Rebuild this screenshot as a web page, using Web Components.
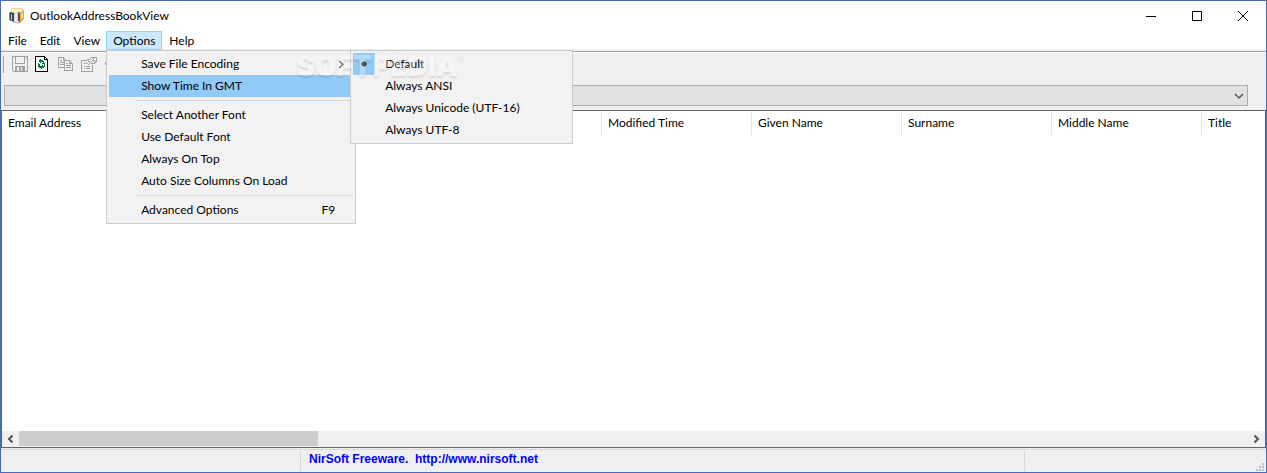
<!DOCTYPE html>
<html lang="en">
<head>
<meta charset="utf-8">
<title>OutlookAddressBookView</title>
<style>
    body {
        margin: 0;
        font: 12px/16px Lato, "Open Sans", sans-serif;
        color: #000;
    }
</style>
</head>
<body>
<ab-window>
    <ab-titlebar>OutlookAddressBookView</ab-titlebar>
    <ab-menubar>
        <ab-menu label="File"></ab-menu>
        <ab-menu label="Edit"></ab-menu>
        <ab-menu label="View"></ab-menu>
        <ab-menu label="Options" opened>
            <ab-menu-item submenu>Save File Encoding
                <ab-popup slot="submenu" class="narrow">
                    <ab-menu-radio checked>Default</ab-menu-radio>
                    <ab-menu-radio>Always ANSI</ab-menu-radio>
                    <ab-menu-radio>Always Unicode (UTF-16)</ab-menu-radio>
                    <ab-menu-radio>Always UTF-8</ab-menu-radio>
                </ab-popup>
            </ab-menu-item>
            <ab-menu-item active>Show Time In GMT</ab-menu-item>
            <ab-separator></ab-separator>
            <ab-menu-item>Select Another Font</ab-menu-item>
            <ab-menu-item>Use Default Font</ab-menu-item>
            <ab-menu-item>Always On Top</ab-menu-item>
            <ab-menu-item>Auto Size Columns On Load</ab-menu-item>
            <ab-separator></ab-separator>
            <ab-menu-item shortcut="F9">Advanced Options</ab-menu-item>
        </ab-menu>
        <ab-menu label="Help"></ab-menu>
    </ab-menubar>
    <ab-toolbar></ab-toolbar>
    <ab-combo label="Address book"></ab-combo>
    <ab-list columns="Email Address,,,,Modified Time,Given Name,Surname,Middle Name,Title"></ab-list>
    <ab-statusbar></ab-statusbar>
    <ab-watermark slot="overlay">SOFTPEDIA</ab-watermark>
</ab-window>

<script>
const BUTTON_RESET = `
    button {
        margin: 0;
        padding: 0;
        border: 0;
        background: none;
        color: inherit;
        font: inherit;
        text-align: left;
    }
    svg { display: block; }
`;

class AbWindow extends HTMLElement {
    constructor() {
        super();
        this.attachShadow({mode: 'open'});
        this.shadowRoot.innerHTML = `
            <style>
                :host {
                    display: flex;
                    flex-direction: column;
                    box-sizing: border-box;
                    position: relative;
                    min-height: 100vh;
                    border: 1px solid #466bb8;
                    background: #f0f0f0;
                    overflow: hidden;
                }
            </style>
            <slot></slot>
            <slot name="overlay"></slot>
        `;
    }
}

class AbTitlebar extends HTMLElement {
    constructor() {
        super();
        this.attachShadow({mode: 'open'});
        this.shadowRoot.innerHTML = `
            <style>
                ${BUTTON_RESET}
                :host {
                    display: flex;
                    align-items: center;
                    height: 30px;
                    padding-left: 8px;
                    background: #fff;
                }
                h1 {
                    flex: 1;
                    margin: 0 0 0 5px;
                    font: inherit;
                }
                button {
                    display: flex;
                    align-items: center;
                    justify-content: center;
                    width: 46px;
                    height: 30px;
                }
            </style>
            <svg width="16" height="16" viewBox="0 0 16 16">
                <path d="M2 1l2-1h9l2 2v3H2z" fill="#f3cf8c"/>
                <path d="M3 1h9l1 3H3z" fill="#fdf0d2"/>
                <path d="M10 5l5-2v8l-4 4-1-1z" fill="#eda938"/>
                <path d="M12 6l2-1v4l-2 2z" fill="#fbe3ae"/>
                <path d="M0 4l2 1v8l-2-1z" fill="#8d8a86"/>
                <path d="M1 4l4 1v9l-4-2z" fill="#45464c"/>
                <path d="M2 6l1 1v5l-1-1z" fill="#c9ccd2"/>
                <path d="M5 5l4-1v9l-4 1z" fill="#c5d4e8"/>
                <path d="M6 6l2-1v7l-2 1z" fill="#eef4fb"/>
                <path d="M9 4l2 1v9l-2-1z" fill="#55565c"/>
                <path d="M3 13.500l6 1.500 3-1" stroke="#a5a19a" fill="none"/>
            </svg>
            <h1><slot></slot></h1>
            <button aria-label="Minimize">
                <svg width="10" height="10"><path d="M0 5h10v1H0z"/></svg>
            </button>
            <button aria-label="Maximize">
                <svg width="10" height="10"><path d="M.5.5h9v9h-9z" fill="none" stroke="#000"/></svg>
            </button>
            <button aria-label="Close">
                <svg width="10" height="10"><path d="M0 0l10 10M10 0L0 10" stroke="#000"/></svg>
            </button>
        `;
    }
}

class AbMenubar extends HTMLElement {
    constructor() {
        super();
        this.attachShadow({mode: 'open'});
        this.shadowRoot.innerHTML = `
            <style>
                :host {
                    display: flex;
                    align-items: flex-start;
                    height: 20px;
                    background: #fff;
                    box-shadow: inset 0 -2px #f0f0f0;
                }
            </style>
            <slot></slot>
        `;
    }
}

class AbMenu extends HTMLElement {
    constructor() {
        super();
        this.attachShadow({mode: 'open'});
        const label = this.getAttribute('label');
        this.shadowRoot.innerHTML = `
            <style>
                ${BUTTON_RESET}
                :host {
                    display: block;
                    position: relative;
                }
                button {
                    display: block;
                    height: 19px;
                    padding: 0 6px 0 7px;
                }
                ab-popup {
                    display: none;
                    top: 19px;
                    left: 0;
                    width: 250px;
                }
                :host([opened]) button {
                    padding: 0 6px;
                    border: 1px solid #99d1ff;
                    background: #cce8ff;
                }
                :host([opened]) ab-popup {
                    display: block;
                }
            </style>
            <button aria-haspopup="menu">${label}</button>
            <ab-popup><slot></slot></ab-popup>
        `;
        this.shadowRoot.querySelector('button').addEventListener('click', () => {
            this.toggleAttribute('opened');
        });
    }
}

class AbPopup extends HTMLElement {
    constructor() {
        super();
        this.attachShadow({mode: 'open'});
        this.shadowRoot.innerHTML = `
            <style>
                :host {
                    display: block;
                    position: absolute;
                    z-index: 10;
                    box-sizing: border-box;
                    padding: 2px;
                    border: 1px solid #ccc;
                    background: #f2f2f2;
                }
                :host(.narrow) {
                    top: -3px;
                    left: calc(100% - 3px);
                    width: 223px;
                }
            </style>
            <slot></slot>
        `;
    }
}

class AbMenuItem extends HTMLElement {
    constructor() {
        super();
        this.attachShadow({mode: 'open'});
        const shortcut = this.getAttribute('shortcut') || '';
        this.shadowRoot.innerHTML = `
            <style>
                ${BUTTON_RESET}
                :host {
                    display: block;
                    position: relative;
                }
                button {
                    display: flex;
                    align-items: center;
                    justify-content: space-between;
                    width: 100%;
                    height: 22px;
                    padding: 0 18px 0 32px;
                }
                :host([submenu]) button {
                    padding-right: 9px;
                }
                :host([active]) button {
                    background: #91c9f7;
                }
                svg { display: none; }
                :host([submenu]) svg { display: block; }
            </style>
            <button>
                <span><slot></slot></span>
                <span>${shortcut}</span>
                <svg width="6" height="9"><path d="M1 1l4 3.500L1 8" fill="none" stroke="#222" stroke-width="1.200"/></svg>
            </button>
            <slot name="submenu"></slot>
        `;
    }
}

class AbMenuRadio extends HTMLElement {
    constructor() {
        super();
        this.attachShadow({mode: 'open'});
        const checked = this.hasAttribute('checked') ? 'checked' : '';
        this.shadowRoot.innerHTML = `
            <style>
                :host { display: block; }
                label {
                    display: flex;
                    align-items: center;
                    gap: 10px;
                    height: 22px;
                }
                input {
                    appearance: none;
                    width: 22px;
                    height: 22px;
                    margin: 0;
                }
                input:checked {
                    background: radial-gradient(circle at 50% 50%, #111 2px, transparent 3px) #91c9f7;
                }
            </style>
            <label><input type="radio" ${checked}><span><slot></slot></span></label>
        `;
    }
}

class AbSeparator extends HTMLElement {
    constructor() {
        super();
        this.attachShadow({mode: 'open'});
        this.shadowRoot.innerHTML = `
            <style>
                :host {
                    display: block;
                    padding: 3px 0 3px 28px;
                }
                div {
                    height: 1px;
                    background: #d7d7d7;
                }
            </style>
            <div></div>
        `;
    }
}

class AbToolbar extends HTMLElement {
    constructor() {
        super();
        this.attachShadow({mode: 'open'});
        this.shadowRoot.innerHTML = `
            <style>
                ${BUTTON_RESET}
                :host {
                    display: flex;
                    gap: 7px;
                    box-sizing: border-box;
                    height: 32px;
                    padding: 4px 2px;
                    border-top: 1px solid #a0a0a0;
                    box-shadow: inset 0 1px #fff;
                }
                i {
                    width: 1px;
                    height: 17px;
                    margin-right: 1px;
                    background: #a0a0a0;
                }
                button {
                    width: 16px;
                    height: 16px;
                }
            </style>
            <i></i>
            <button aria-label="Save">
                <svg width="16" height="16" fill="none" stroke="#a0a0a0" shape-rendering="crispEdges">
                    <path d="M.5.5h15v15h-14l-1-1z"/>
                    <path d="M3.500.5v7h9v-7M13.500 2.500h1"/>
                    <path d="M3 10h10v6H3z" fill="#a0a0a0" stroke="none"/>
                    <path d="M5 11h2v4H5zM9 11h1v4H9z" fill="#f0f0f0" stroke="none"/>
                </svg>
            </button>
            <button aria-label="Refresh">
                <svg width="16" height="16" shape-rendering="crispEdges">
                    <path d="M.5.5h9l3 3v12H.5z" fill="#fff" stroke="#000"/>
                    <path d="M9.500.5v3h3" fill="none" stroke="#000"/>
                    <path d="M5 3h1v1h2v1h1v2h1v1H7V7h1V6H6v1H5V6H4V4h1z" fill="#008040"/>
                    <path d="M3 7h1v1h1v2h2V9h1v3H7v1H6v-1H4v-1H3zM9 8h1v3H9v1H8v-2h1z" fill="#008040"/>
                </svg>
            </button>
            <button aria-label="Copy">
                <svg width="16" height="16" fill="none" stroke="#a0a0a0" shape-rendering="crispEdges">
                    <path d="M6 11.500H.5v-10h5l3 3V5M5.500 1.500v3h3M2 4.500h2M2 6.500h4M2 8.500h4"/>
                    <path d="M6.500 4.500h5l3 3v7h-8zM11.500 4.500v3h3M8 7.500h2M8 9.500h5M8 11.500h5"/>
                </svg>
            </button>
            <button aria-label="Properties">
                <svg width="16" height="16" fill="none" stroke="#a0a0a0" shape-rendering="crispEdges">
                    <path d="M5 4.500H.5v11h11V9M3 7.500h2M3 10.500h1M5 10.500h4M3 12.500h1M5 12.500h4"/>
                    <path d="M4.500 5.500l2-2h2l2-2h2v2l-3 3-2 2-2-2M11 1.500h4v4l-2 2h-3M7 5.500h2M12 4.500h2"/>
                </svg>
            </button>
            <button aria-label="Find">
                <svg width="16" height="16" fill="#a0a0a0"><path d="M1 6h6v3H1zM8 4h6v7H8z"/></svg>
            </button>
        `;
    }
}

class AbCombo extends HTMLElement {
    constructor() {
        super();
        this.attachShadow({mode: 'open'});
        this.shadowRoot.innerHTML = `
            <style>
                :host {
                    display: block;
                    padding: 2px 18px 4px 3px;
                }
                div {
                    display: grid;
                    align-items: center;
                }
                select, svg { grid-area: 1 / 1; }
                select {
                    appearance: none;
                    width: 100%;
                    height: 21px;
                    margin: 0;
                    border: 1px solid #adadad;
                    border-radius: 0;
                    background: #e1e1e1;
                    font: inherit;
                }
                svg {
                    justify-self: end;
                    margin-right: 4px;
                    pointer-events: none;
                }
            </style>
            <div>
                <select aria-label="${this.getAttribute('label')}"></select>
                <svg width="10" height="6"><path d="M1 1l4 4 4-4" fill="none" stroke="#444" stroke-width="1.200"/></svg>
            </div>
        `;
    }
}

class AbList extends HTMLElement {
    constructor() {
        super();
        this.attachShadow({mode: 'open'});
        const columns = this.getAttribute('columns').split(',');
        this.shadowRoot.innerHTML = `
            <style>
                :host {
                    display: flex;
                    flex: 1;
                    flex-direction: column;
                    border: 1px solid #646464;
                    background: #fff;
                }
                #view {
                    flex: 1;
                    overflow: hidden;
                }
                table {
                    width: 1350px;
                    table-layout: fixed;
                    border-collapse: separate;
                    border-spacing: 0;
                }
                th {
                    height: 24px;
                    padding: 0 6px;
                    border-right: 1px solid #e5e5e5;
                    font-weight: normal;
                    text-align: left;
                }
            </style>
            <div id="view">
                <table>
                    <thead><tr>${columns.map(c => `<th>${c}</th>`).join('')}</tr></thead>
                    <tbody></tbody>
                </table>
            </div>
            <ab-scrollbar></ab-scrollbar>
        `;
    }
}

class AbScrollbar extends HTMLElement {
    constructor() {
        super();
        this.attachShadow({mode: 'open'});
        this.shadowRoot.innerHTML = `
            <style>
                ${BUTTON_RESET}
                :host {
                    display: flex;
                    height: 16px;
                    background: #f0f0f0;
                }
                button {
                    display: flex;
                    align-items: center;
                    justify-content: center;
                    width: 17px;
                    height: 15px;
                }
                #track { flex: 1; }
                #thumb {
                    width: 24.3%;
                    height: 15px;
                    background: #cdcdcd;
                }
            </style>
            <button aria-label="Scroll left">
                <svg width="7" height="8"><path d="M5.500.5L2 4l3.500 3.500" fill="none" stroke="#505050" stroke-width="2"/></svg>
            </button>
            <div id="track"><div id="thumb"></div></div>
            <button aria-label="Scroll right">
                <svg width="7" height="8"><path d="M1.500.5L5 4 1.500 7.500" fill="none" stroke="#505050" stroke-width="2"/></svg>
            </button>
        `;
    }
}

class AbStatusbar extends HTMLElement {
    constructor() {
        super();
        this.attachShadow({mode: 'open'});
        this.shadowRoot.innerHTML = `
            <style>
                :host {
                    display: flex;
                    box-sizing: border-box;
                    height: 24px;
                    padding: 3px 0 1px;
                    box-shadow: inset 0 1px #f0f0f0, inset 0 2px #d7d7d7;
                }
                div { box-sizing: border-box; }
                #count {
                    width: 300px;
                    border-right: 1px solid #d7d7d7;
                }
                #about {
                    flex: 1;
                    padding-left: 8px;
                    font: bold 12px/16px "Liberation Sans", sans-serif;
                    white-space: pre;
                }
                a {
                    color: #00f;
                    text-decoration: none;
                }
                #rest {
                    display: flex;
                    align-items: flex-end;
                    justify-content: flex-end;
                    width: 242px;
                    padding-right: 2px;
                    border-left: 1px solid #d7d7d7;
                }
            </style>
            <div id="count"></div>
            <div id="about"><a href="http://www.nirsoft.net">NirSoft Freeware.  http://www.nirsoft.net</a></div>
            <div id="rest">
                <svg width="8" height="8" fill="#bfbfbf">
                    <path d="M6 0h2v2H6zM3 3h2v2H3zM6 3h2v2H6zM0 6h2v2H0zM3 6h2v2H3zM6 6h2v2H6z"/>
                </svg>
            </div>
        `;
    }
}

class AbWatermark extends HTMLElement {
    constructor() {
        super();
        this.attachShadow({mode: 'open'});
        this.shadowRoot.innerHTML = `
            <style>
                :host {
                    display: flex;
                    position: absolute;
                    top: 50px;
                    left: 295px;
                    z-index: 20;
                    color: #fff;
                    font: 900 28px/30px Inter, "Open Sans", sans-serif;
                    text-shadow: 0 2px 2px rgba(0, 0, 0, 0.35);
                    opacity: 0.3;
                    pointer-events: none;
                }
                small {
                    font-size: 9px;
                    line-height: 12px;
                }
            </style>
            <slot></slot><small>®</small>
        `;
    }
}

customElements.define('ab-window', AbWindow);
customElements.define('ab-titlebar', AbTitlebar);
customElements.define('ab-menubar', AbMenubar);
customElements.define('ab-popup', AbPopup);
customElements.define('ab-menu', AbMenu);
customElements.define('ab-menu-item', AbMenuItem);
customElements.define('ab-menu-radio', AbMenuRadio);
customElements.define('ab-separator', AbSeparator);
customElements.define('ab-toolbar', AbToolbar);
customElements.define('ab-combo', AbCombo);
customElements.define('ab-scrollbar', AbScrollbar);
customElements.define('ab-list', AbList);
customElements.define('ab-statusbar', AbStatusbar);
customElements.define('ab-watermark', AbWatermark);
</script>
</body>
</html>
